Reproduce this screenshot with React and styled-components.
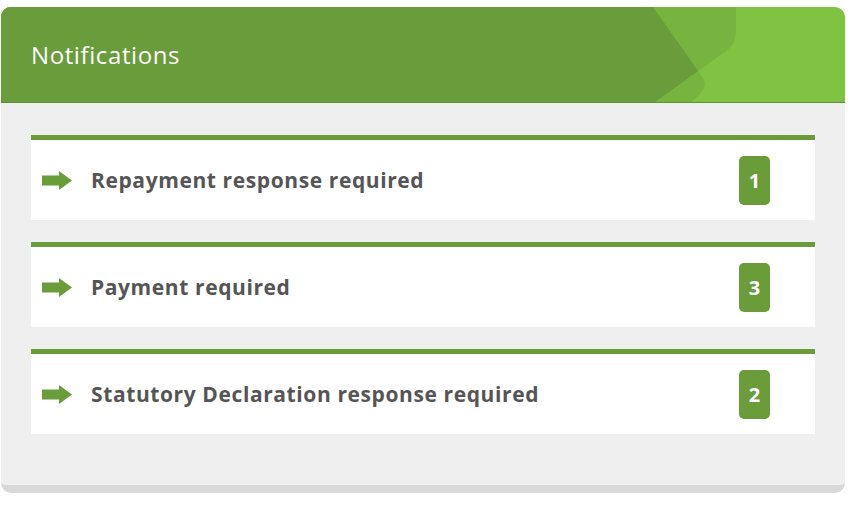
import React from 'react';
import styled, { createGlobalStyle } from 'styled-components';

const GlobalStyle = createGlobalStyle`
  body {
    margin: 0;
    background: #ffffff;
    font-family: 'Open Sans', 'Liberation Sans', sans-serif;
  }
`;

const Page = styled.div`
  padding: 7px 0 0 1px;
`;

const Panel = styled.section`
  width: 844px;
  border-radius: 10px;
  background: #efefef;
  border-bottom: 8px solid #d9d9d9;
`;

const Header = styled.header`
  position: relative;
  height: 95px;
  display: flex;
  align-items: center;
  padding-left: 30px;
  background: #80c342;
  border-bottom: 1px solid #5f9134;
  border-radius: 10px 10px 0 0;
  overflow: hidden;
`;

const HeaderArt = styled.svg`
  position: absolute;
  top: 0;
  left: 0;
  width: 100%;
  height: 100%;
`;

const Title = styled.h2`
  position: relative;
  margin: 0;
  color: #ffffff;
  font-size: 24px;
  font-weight: 400;
  letter-spacing: 0.6px;
`;

const List = styled.div`
  display: flex;
  flex-direction: column;
  gap: 22px;
  padding: 32px 30px 51px;
`;

const Card = styled.div`
  display: flex;
  align-items: center;
  height: 80px;
  padding: 0 45px 0 11px;
  background: #ffffff;
  border-top: 5px solid #6a9c3a;
`;

const Arrow = styled.svg`
  flex: none;
  width: 30px;
  height: 19px;
  margin-right: 19px;
`;

const Label = styled.span`
  flex: 1;
  color: #555555;
  font-size: 21px;
  font-weight: 700;
  letter-spacing: 0.6px;
`;

const Badge = styled.span`
  display: flex;
  align-items: center;
  justify-content: center;
  width: 31px;
  height: 49px;
  border-radius: 5px;
  background: #6a9c3a;
  color: #ffffff;
  font-size: 20px;
  font-weight: 700;
`;

const SHAPE_B = 'M0 0 H735 V25 Q735 37 725.2 44 L654 95 H0 Z';
const SHAPE_A = 'M0 0 H652 L701.2 69.8 Q707 78 700.1 85.3 L691 95 H0 Z';

const notifications = [
  { label: 'Repayment response required', count: 1 },
  { label: 'Payment required', count: 3 },
  { label: 'Statutory Declaration response required', count: 2 },
];

const ArrowIcon = () => (
  <Arrow viewBox="0 0 30 19">
    <rect x="0" y="4.5" width="19" height="10" fill="#6a9c3a" />
    <polygon points="17,0 30,9.5 17,19" fill="#6a9c3a" />
  </Arrow>
);

export default function App() {
  return (
    <Page>
      <GlobalStyle />
      <Panel>
        <Header>
          <HeaderArt viewBox="0 0 844 95" preserveAspectRatio="none">
            <defs>
              <clipPath id="shape-b">
                <path d={SHAPE_B} />
              </clipPath>
            </defs>
            <path d={SHAPE_B} fill="#77b43f" />
            <path d={SHAPE_A} fill="#77b43f" />
            <path d={SHAPE_A} fill="#699c3a" clipPath="url(#shape-b)" />
          </HeaderArt>
          <Title>Notifications</Title>
        </Header>
        <List>
          {notifications.map(n => (
            <Card key={n.label}>
              <ArrowIcon />
              <Label>{n.label}</Label>
              <Badge>{n.count}</Badge>
            </Card>
          ))}
        </List>
      </Panel>
    </Page>
  );
}
